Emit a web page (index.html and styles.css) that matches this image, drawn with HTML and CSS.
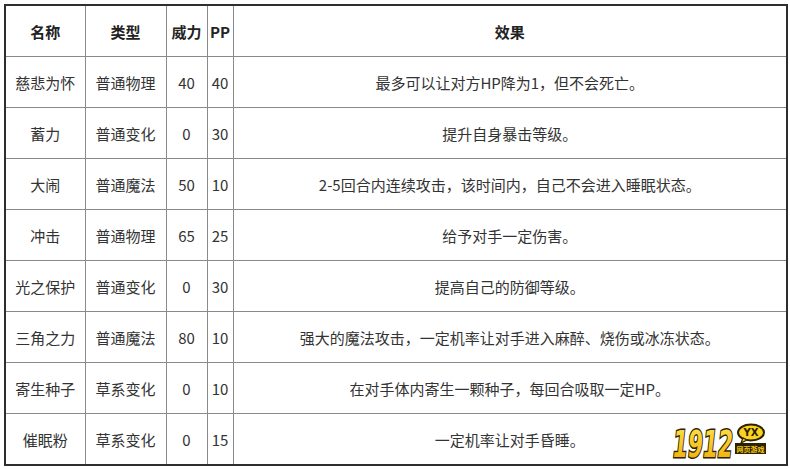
FILE: index.html
```html
<!DOCTYPE html>
<html lang="zh">
<head>
<meta charset="utf-8">
<link rel="stylesheet" href="styles.css">
</head>
<body>
<div class="wrap">
<table class="skills">
<colgroup>
<col class="c1"><col class="c2"><col class="c3"><col class="c4"><col class="c5">
</colgroup>
<thead>
<tr><th>名称</th><th>类型</th><th>威力</th><th>PP</th><th>效果</th></tr>
</thead>
<tbody>
<tr><td>慈悲为怀</td><td>普通物理</td><td>40</td><td>40</td><td>最多可以让对方HP降为1，但不会死亡。</td></tr>
<tr><td>蓄力</td><td>普通变化</td><td>0</td><td>30</td><td>提升自身暴击等级。</td></tr>
<tr><td>大闹</td><td>普通魔法</td><td>50</td><td>10</td><td>2-5回合内连续攻击，该时间内，自己不会进入睡眠状态。</td></tr>
<tr><td>冲击</td><td>普通物理</td><td>65</td><td>25</td><td>给予对手一定伤害。</td></tr>
<tr><td>光之保护</td><td>普通变化</td><td>0</td><td>30</td><td>提高自己的防御等级。</td></tr>
<tr><td>三角之力</td><td>普通魔法</td><td>80</td><td>10</td><td>强大的魔法攻击，一定机率让对手进入麻醉、烧伤或冰冻状态。</td></tr>
<tr><td>寄生种子</td><td>草系变化</td><td>0</td><td>10</td><td>在对手体内寄生一颗种子，每回合吸取一定HP。</td></tr>
<tr><td>催眠粉</td><td>草系变化</td><td>0</td><td>15</td><td>一定机率让对手昏睡。</td></tr>
</tbody>
</table>
<svg class="logo" width="98" height="40" viewBox="0 0 98 40">
  <defs>
    <linearGradient id="yg" x1="0" y1="0" x2="0" y2="1">
      <stop offset="0" stop-color="#ffe552"/>
      <stop offset="1" stop-color="#f2a900"/>
    </linearGradient>
  </defs>
  <text x="3" y="34" class="num" fill="url(#yg)" stroke="#2b2200" stroke-width="3" paint-order="stroke" textLength="60" lengthAdjust="spacingAndGlyphs">1912</text>
  <ellipse cx="81" cy="9.5" rx="13" ry="8" fill="#fbd21f" stroke="#2b2200" stroke-width="2"/>
  <path d="M73 15 L71 20 L77 17 Z" fill="#fbd21f" stroke="#2b2200" stroke-width="1.2"/>
  <text x="81" y="13" class="yx" fill="#2b2200">YX</text>
  <rect x="65" y="20" width="31" height="11" fill="#2b2200"/>
  <text x="80.5" y="28.8" class="cn" fill="#f5c518" textLength="28" lengthAdjust="spacingAndGlyphs">网页游戏</text>
</svg>
</div>
</body>
</html>
```
FILE: styles.css
```css
html, body {
  margin: 0;
  padding: 0;
  background: #fff;
}
.wrap {
  position: relative;
  padding: 4px 2px 0 4px;
  width: 784px;
}
.skills {
  border-collapse: collapse;
  width: 784px;
  height: 460px;
  table-layout: fixed;
  border: 2px solid #2e2e2e;
  font-family: "Microsoft YaHei", "Noto Sans CJK SC", sans-serif;
  font-size: 15px;
  color: #333;
}
.c1 { width: 80px; }
.c2 { width: 81px; }
.c3 { width: 41px; }
.c4 { width: 26px; }
.c5 { width: auto; }
.skills th, .skills td {
  border: 1px solid #8a8a8a;
  text-align: center;
  vertical-align: middle;
  padding: 0;
  height: 50px;
  white-space: nowrap;
}
.skills th {
  font-weight: bold;
  color: #222;
}
.logo {
  position: absolute;
  left: 670px;
  top: 423px;
}
.logo .num {
  font-family: "DejaVu Sans", sans-serif;
  font-weight: bold;
  font-style: italic;
  font-size: 38px;
}
.logo .yx {
  font-family: "DejaVu Sans", sans-serif;
  font-weight: bold;
  font-size: 10px;
  text-anchor: middle;
}
.logo .cn {
  font-family: "Noto Sans CJK SC", sans-serif;
  font-weight: bold;
  font-size: 7px;
  text-anchor: middle;
}
```
